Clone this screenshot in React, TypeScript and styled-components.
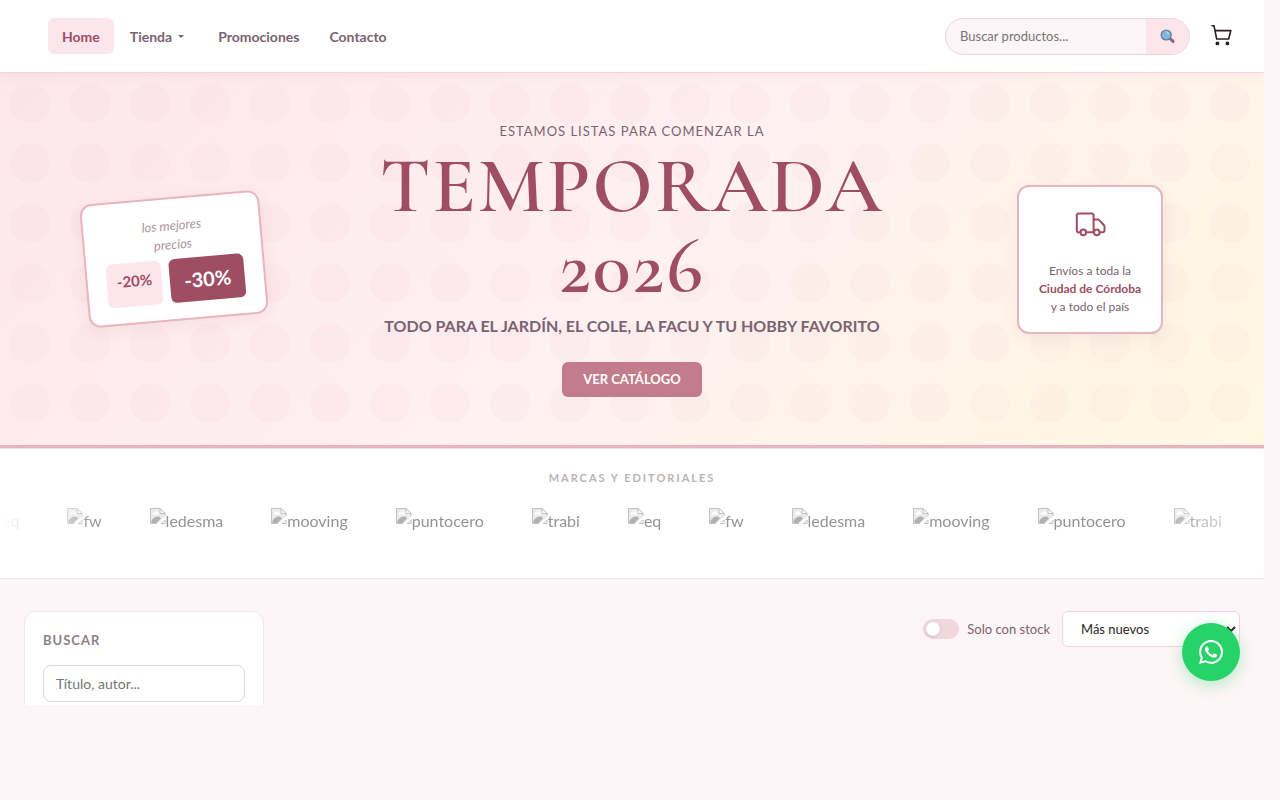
import React from 'react';
import styled, { createGlobalStyle, css } from 'styled-components';

const color = {
  page: '#fef5f8',
  wine: '#9e4d63',
  rose: '#c27c8c',
  border: '#e8b4c0',
  softBorder: '#f3d3dc',
  blush: '#fce6ec',
  text: '#7a6370',
  muted: '#a8969e',
};

const GlobalStyle = createGlobalStyle`
  *, *::before, *::after { box-sizing: border-box; }
  body {
    margin: 0;
    background: ${color.page};
    color: ${color.text};
    font-family: Lato, 'Liberation Sans', sans-serif;
    font-size: 14px;
  }
  button, input, select { font-family: inherit; }
  h1, h2, p, ul { margin: 0; padding: 0; }
`;

const Page = styled.div`
  position: relative;
  margin-right: 16px;
  overflow: hidden;
`;

const Header = styled.header`
  position: relative;
  z-index: 1;
  display: flex;
  align-items: center;
  justify-content: space-between;
  height: 73px;
  padding: 0 32px 0 48px;
  background: #fff;
  border-bottom: 1px solid ${color.softBorder};
  box-shadow: 0 2px 12px rgba(158, 77, 99, 0.08);
`;

const Nav = styled.nav`
  display: flex;
  align-items: center;
  gap: 2px;
`;

const navItem = css`
  display: flex;
  align-items: center;
  gap: 6px;
  height: 36px;
  padding: 0 14px;
  border: 0;
  border-radius: 6px;
  font-size: 14px;
  font-weight: 700;
  text-decoration: none;
`;

const NavLink = styled.a<{ $active?: boolean }>`
  ${navItem}
  color: ${(p) => (p.$active ? color.wine : color.text)};
  background: ${(p) => (p.$active ? color.blush : 'transparent')};
`;

const NavMenuButton = styled.button`
  ${navItem}
  margin-right: 4px;
  color: ${color.text};
  background: transparent;
`;

const Caret = styled.span`
  border: 3px solid transparent;
  border-top: 3px solid ${color.text};
  border-bottom: 0;
`;

const HeaderTools = styled.div`
  display: flex;
  align-items: center;
  gap: 20px;
`;

const SearchForm = styled.form`
  display: flex;
  width: 245px;
  height: 37px;
  overflow: hidden;
  border: 1px solid ${color.softBorder};
  border-radius: 20px;
  background: ${color.page};
`;

const SearchInput = styled.input`
  flex: 1;
  min-width: 0;
  padding: 0 14px;
  border: 0;
  outline: 0;
  background: transparent;
  font-size: 13px;
  &::placeholder { color: #757575; }
`;

const SearchButton = styled.button`
  display: flex;
  align-items: center;
  justify-content: center;
  width: 43px;
  padding: 0;
  border: 0;
  background: ${color.blush};
`;

const CartButton = styled.button`
  display: flex;
  padding: 0;
  border: 0;
  background: transparent;
`;

const Hero = styled.section`
  display: grid;
  grid-template-columns: 252px minmax(0, 1fr) 252px;
  align-items: center;
  justify-items: center;
  padding: 48px;
  border-bottom: 3px solid ${color.border};
  background:
    radial-gradient(circle, rgba(232, 180, 192, 0.08) 20px, transparent 20px) 0 0 / 60px 60px,
    linear-gradient(135deg, #fde7eb 0%, #fff0f2 50%, #fff8e1 100%);
`;

const HeroText = styled.div`
  display: flex;
  flex-direction: column;
  align-items: center;
  text-align: center;
  text-transform: uppercase;
`;

const Eyebrow = styled.p`
  margin-bottom: 5px;
  font-size: 13px;
  line-height: 20px;
  letter-spacing: 1px;
`;

const Title = styled.h1`
  color: ${color.wine};
  font-family: 'Cormorant Garamond', 'Liberation Serif', serif;
  font-size: 79px;
  font-weight: 600;
  line-height: 80px;
  letter-spacing: 2px;
`;

const Tagline = styled.p`
  margin: 8px 0 24px;
  font-size: 16px;
  font-weight: 700;
  line-height: 24px;
`;

const CatalogLink = styled.a`
  padding: 0 21px;
  border-radius: 6px;
  background: ${color.rose};
  color: #fff;
  font-size: 13px;
  font-weight: 700;
  line-height: 35px;
  text-decoration: none;
`;

const floatingCard = css`
  border: 2px solid ${color.border};
  border-radius: 12px;
  background: #fff;
  box-shadow: 0 4px 16px rgba(158, 77, 99, 0.08);
  text-align: center;
`;

const PriceCard = styled.aside`
  ${floatingCard}
  padding: 17px 19px 16px;
  transform: rotate(-5deg);
`;

const PriceNote = styled.p`
  margin-bottom: 5px;
  color: ${color.muted};
  font-size: 13px;
  font-style: italic;
  line-height: 19px;
`;

const Chips = styled.div`
  display: flex;
  gap: 8px;
`;

const Chip = styled.span<{ $strong?: boolean }>`
  padding: ${(p) => (p.$strong ? '6px 14px' : '6px 10px')};
  border-radius: 6px;
  background: ${(p) => (p.$strong ? color.wine : color.blush)};
  color: ${(p) => (p.$strong ? '#fff' : color.wine)};
  font-size: ${(p) => (p.$strong ? 20 : 15)}px;
  font-weight: 700;
  line-height: ${(p) => (p.$strong ? 32 : 24)}px;
`;

const ShippingCard = styled.aside`
  ${floatingCard}
  display: flex;
  flex-direction: column;
  align-items: center;
  gap: 15px;
  padding: 16px 20px;
  font-size: 12px;
  line-height: 18px;
  strong { color: ${color.wine}; }
`;

const Brands = styled.section`
  height: 131px;
  padding: 20px 0;
  overflow: hidden;
  border: solid #e8e4e6;
  border-width: 1px 0;
  background: #fff;
`;

const BrandsTitle = styled.h2`
  margin-bottom: 21px;
  color: #b9b3b6;
  font-size: 11px;
  font-weight: 700;
  line-height: 18px;
  letter-spacing: 2px;
  text-align: center;
  text-transform: uppercase;
`;

const BrandMask = styled.div`
  overflow: hidden;
  mask-image: linear-gradient(90deg, transparent, #000 8%, #000 92%, transparent);
`;

const BrandList = styled.ul`
  display: flex;
  gap: 48px;
  margin-left: -14px;
  list-style: none;
  opacity: 0.6;
`;

const Brand = styled.li`
  display: flex;
  flex: none;
  color: #4c4c4c;
  font-size: 16px;
  line-height: 26px;
`;

const Catalog = styled.main`
  display: flex;
  align-items: flex-start;
  justify-content: space-between;
  padding: 32px 24px 0;
`;

const Sidebar = styled.aside`
  width: 240px;
  padding: 18px 18px 3px;
  border: 1px solid #f3e8ec;
  border-bottom: 0;
  border-radius: 12px 12px 0 0;
  background: #fff;
`;

const FilterLabel = styled.label`
  display: block;
  margin-bottom: 14px;
  color: #8d7f8a;
  font-size: 13px;
  font-weight: 700;
  line-height: 21px;
  letter-spacing: 1px;
  text-transform: uppercase;
`;

const FilterInput = styled.input`
  display: block;
  width: 100%;
  height: 37px;
  padding: 0 12px;
  border: 1px solid #ddd8da;
  border-radius: 8px;
  font-size: 14px;
  &::placeholder { color: #757575; }
`;

const Toolbar = styled.div`
  display: flex;
  align-items: center;
  gap: 12px;
`;

const StockLabel = styled.label`
  display: flex;
  align-items: center;
  gap: 8px;
  font-size: 13px;
`;

const Switch = styled.input`
  display: flex;
  align-items: center;
  width: 36px;
  height: 20px;
  margin: 0;
  padding: 0 3px;
  appearance: none;
  border-radius: 10px;
  background: #f0d6dd;
  &::before {
    content: '';
    width: 14px;
    height: 14px;
    border-radius: 50%;
    background: #fff;
    box-shadow: 0 1px 3px rgba(0, 0, 0, 0.15);
  }
  &:checked { justify-content: flex-end; background: ${color.rose}; }
`;

const SortSelect = styled.select`
  width: 178px;
  height: 36px;
  padding: 0 14px;
  border: 1px solid ${color.softBorder};
  border-radius: 6px;
  background: #fff;
  color: #2d1f26;
  font-size: 13px;
`;

const WhatsAppLink = styled.a`
  position: absolute;
  right: 24px;
  bottom: 24px;
  display: flex;
  align-items: center;
  justify-content: center;
  width: 58px;
  height: 58px;
  border-radius: 50%;
  background: #25d366;
  box-shadow: 0 4px 16px rgba(37, 211, 102, 0.35);
`;

const MagnifierIcon = () => (
  <svg width="16" height="16" viewBox="0 0 16 16" aria-hidden="true">
    <path d="M10.5 11l2.6 2.4" stroke="#9a5a70" strokeWidth="3" strokeLinecap="round" />
    <circle cx="6.2" cy="7" r="5" fill="#7fb9dc" stroke="#66759c" strokeWidth="1.2" />
    <path d="M6.8 4.4a3 3 0 0 1 1.8 1.8" stroke="#c9e6f6" strokeWidth="1.2" fill="none" />
  </svg>
);

const CartIcon = () => (
  <svg width="22" height="24" viewBox="0 0 22 24" fill="none" stroke="#2a1d24" strokeWidth="1.6" strokeLinecap="round" strokeLinejoin="round" aria-hidden="true">
    <path d="M2 1.8h2l2.7 13.2h12l2.1-8.4H4.9" />
    <circle cx="7.4" cy="19.4" r="1.1" fill="#2a1d24" />
    <circle cx="17.4" cy="19.4" r="1.1" fill="#2a1d24" />
  </svg>
);

const TruckIcon = () => (
  <svg width="32" height="44" viewBox="0 0 32 44" fill="none" stroke={color.wine} strokeWidth="2" strokeLinejoin="round" strokeLinecap="round" aria-hidden="true">
    <path d="M6.3 29.2H4.6a1.8 1.8 0 0 1-1.8-1.8V12.2A1.8 1.8 0 0 1 4.6 10.4h13.2a1.8 1.8 0 0 1 1.8 1.8V29.2H12.3" />
    <path d="M19.6 16.4h4.1a2 2 0 0 1 1.5.7l4.8 5.2a2 2 0 0 1 .5 1.4v3.7a1.8 1.8 0 0 1-1.8 1.8h-2.4" />
    <circle cx="9.3" cy="29.4" r="2.8" />
    <circle cx="22.8" cy="29.4" r="2.8" fill="#fff" />
  </svg>
);

const MissingImageIcon = () => (
  <svg width="16" height="16" viewBox="0 0 16 16" aria-hidden="true">
    <path d="M1 .5h9l5 5V9L9 15.5H1z" fill="#dedede" />
    <path d="M2.5 6.5C2.5 4.6 4 4.4 4.4 4.4 5 2.8 7.2 3 7.6 4.6c1.2 0 1.7 1 1.4 1.9z" fill="#fff" />
    <path d="M1.5 15v-2c1.5-3.5 5-5 7.5-4.3 1.6.5 2 1.3 1.5 2.3L6.5 15z" fill="#7c7c7c" />
    <path d="M.5 15.5V.5h9.6l5 5v2.4M.5 15.5H7M15.1 12v3.5H11z" fill="none" stroke="#9a9a9a" />
    <path d="M10.1.5v5h5z" fill="#fff" stroke="#9a9a9a" />
    <path d="M6.4 16l9.6-8v2.8L10 16z" fill="#fff" />
  </svg>
);

const WhatsAppIcon = () => (
  <svg width="24" height="24" viewBox="0 0 24 24" fill="#fff" aria-hidden="true">
    <path d="M17.472 14.382c-.297-.149-1.758-.867-2.03-.967-.273-.099-.471-.148-.67.15-.197.297-.767.966-.94 1.164-.173.199-.347.223-.644.075-.297-.15-1.255-.463-2.39-1.475-.883-.788-1.48-1.761-1.653-2.059-.173-.297-.018-.458.13-.606.134-.133.298-.347.446-.52.149-.174.198-.298.298-.497.099-.198.05-.371-.025-.52-.075-.149-.669-1.612-.916-2.207-.242-.579-.487-.5-.669-.51-.173-.008-.371-.01-.57-.01-.198 0-.52.074-.792.372-.272.297-1.04 1.016-1.04 2.479 0 1.462 1.065 2.875 1.213 3.074.149.198 2.096 3.2 5.077 4.487.709.306 1.262.489 1.694.625.712.227 1.36.195 1.871.118.571-.085 1.758-.719 2.006-1.413.248-.694.248-1.289.173-1.413-.074-.124-.272-.198-.57-.347m-5.421 7.403h-.004a9.87 9.87 0 01-5.031-1.378l-.361-.214-3.741.982.998-3.648-.235-.374a9.86 9.86 0 01-1.51-5.26c.001-5.45 4.436-9.884 9.888-9.884 2.64 0 5.122 1.03 6.988 2.898a9.825 9.825 0 012.893 6.994c-.003 5.45-4.437 9.884-9.885 9.884m8.413-18.297A11.815 11.815 0 0012.05 0C5.495 0 .16 5.335.157 11.892c0 2.096.547 4.142 1.588 5.945L.057 24l6.305-1.654a11.882 11.882 0 005.683 1.448h.005c6.554 0 11.89-5.335 11.893-11.893a11.821 11.821 0 00-3.48-8.413z" />
  </svg>
);

const brands = ['eq', 'fw', 'ledesma', 'mooving', 'puntocero', 'trabi'];

export default function App() {
  return (
    <>
      <GlobalStyle />
      <Page>
        <Header>
          <Nav>
            <NavLink href="#home" $active>Home</NavLink>
            <NavMenuButton type="button">Tienda <Caret /></NavMenuButton>
            <NavLink href="#promociones">Promociones</NavLink>
            <NavLink href="#contacto">Contacto</NavLink>
          </Nav>
          <HeaderTools>
            <SearchForm role="search">
              <SearchInput type="text" aria-label="Buscar productos" placeholder="Buscar productos..." />
              <SearchButton type="submit" aria-label="Buscar"><MagnifierIcon /></SearchButton>
            </SearchForm>
            <CartButton type="button" aria-label="Carrito"><CartIcon /></CartButton>
          </HeaderTools>
        </Header>

        <Hero>
          <PriceCard>
            <PriceNote>los mejores<br />precios</PriceNote>
            <Chips>
              <Chip>-20%</Chip>
              <Chip $strong>-30%</Chip>
            </Chips>
          </PriceCard>
          <HeroText>
            <Eyebrow>Estamos listas para comenzar la</Eyebrow>
            <Title>Temporada<br />2026</Title>
            <Tagline>Todo para el jardín, el cole, la facu y tu hobby favorito</Tagline>
            <CatalogLink href="#catalogo">Ver catálogo</CatalogLink>
          </HeroText>
          <ShippingCard>
            <TruckIcon />
            <p>Envíos a toda la<br /><strong>Ciudad de Córdoba</strong><br />y a todo el país</p>
          </ShippingCard>
        </Hero>

        <Brands>
          <BrandsTitle>Marcas y editoriales</BrandsTitle>
          <BrandMask>
            <BrandList>
              {[...brands, ...brands].map((name, i) => (
                <Brand key={i}><MissingImageIcon />{name}</Brand>
              ))}
            </BrandList>
          </BrandMask>
        </Brands>

        <Catalog id="catalogo">
          <Sidebar>
            <FilterLabel htmlFor="filter-text">Buscar</FilterLabel>
            <FilterInput id="filter-text" type="text" placeholder="Título, autor..." />
          </Sidebar>
          <Toolbar>
            <StockLabel><Switch type="checkbox" />Solo con stock</StockLabel>
            <SortSelect aria-label="Ordenar" defaultValue="nuevos">
              <option value="nuevos">Más nuevos</option>
            </SortSelect>
          </Toolbar>
        </Catalog>

        <WhatsAppLink href="#whatsapp" aria-label="WhatsApp"><WhatsAppIcon /></WhatsAppLink>
      </Page>
    </>
  );
}
